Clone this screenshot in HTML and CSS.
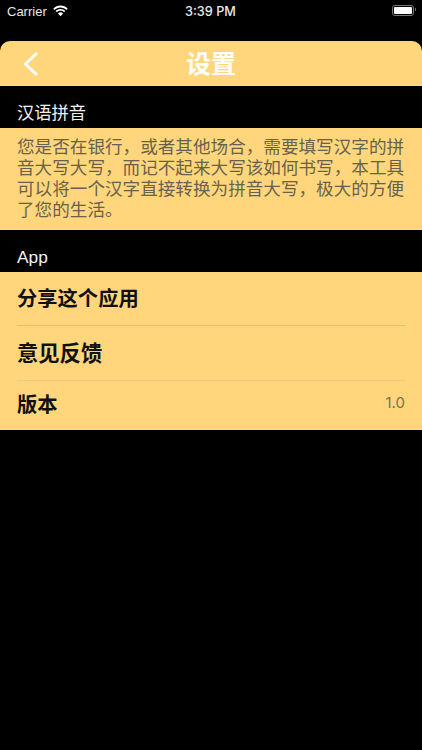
FILE: index.html
```html
<!DOCTYPE html>
<html lang="zh">
<head>
    <meta charset="UTF-8">
    <meta name="viewport" content="width=device-width, initial-scale=1.0">
    <title>设置</title>
    <link rel="stylesheet" href="styles.css">
</head>
<body>
    <div class="statusbar">
        <div class="status-left">
            <span class="carrier">Carrier</span>
            <svg class="wifi" width="16" height="12" viewBox="0 0 16 12">
                <path d="M8 2.200c2.200 0 4.200.9 5.700 2.300l1.100-1.200C13 1.500 10.600.4 8 .4S3 1.500 1.200 3.300l1.100 1.200C3.800 3.100 5.800 2.200 8 2.200z" fill="#fff"/>
                <path d="M8 5.400c1.300 0 2.500.5 3.400 1.300l1.200-1.200C11.400 4.300 9.800 3.600 8 3.600s-3.400.7-4.600 1.900l1.200 1.200C5.500 5.900 6.700 5.400 8 5.400z" fill="#fff"/>
                <path d="M8 6.800c-1 0-1.800.4-2.400 1L8 10.400l2.400-2.600c-.6-.6-1.400-1-2.400-1z" fill="#fff"/>
            </svg>
        </div>
        <div class="status-time">3:39 PM</div>
        <div class="battery"><div class="battery-level"></div></div>
    </div>

    <div class="navbar">
        <svg class="back" width="18" height="26" viewBox="0 0 18 26">
            <path d="M15 2 L3.500 13 L15 24" fill="none" stroke="#fff" stroke-width="3"/>
        </svg>
        <div class="nav-title">设置</div>
    </div>

    <div class="section-label">汉语拼音</div>
    <div class="band intro">您是否在银行，或者其他场合，需要填写汉字的拼音大写大写，而记不起来大写该如何书写，本工具可以将一个汉字直接转换为拼音大写，极大的方便了您的生活。</div>

    <div class="section-label">App</div>
    <div class="band">
        <div class="row row-share"><span class="row-title">分享这个应用</span></div>
        <div class="row row-feedback"><span class="row-title">意见反馈</span></div>
        <div class="row row-version"><span class="row-title">版本</span><span class="row-value">1.0</span></div>
    </div>
</body>
</html>
```

FILE: styles.css
```css
body {
    margin: 0;
    height: 750px;
    overflow: hidden;
    background: #000;
    color: #fff;
    font-family: "Liberation Sans", "Noto Sans CJK SC", sans-serif;
}

.statusbar {
    height: 41px;
    padding: 1px 8px 0 7px;
    box-sizing: border-box;
    display: grid;
    grid-template-columns: 1fr auto 1fr;
    align-items: start;
    font-size: 13px;
    line-height: 20px;
    color: #e8e8e8;
}

.status-left {
    display: flex;
    align-items: center;
    gap: 5px;
}

.carrier {
    padding-top: 1px;
}

.wifi {
    width: 17px;
    height: 13px;
    margin-top: -1px;
}

.status-time {
    padding-top: 1px;
    font-family: Inter, sans-serif;
    font-size: 12.700px;
    font-weight: 500;
}

.battery {
    justify-self: end;
    position: relative;
    width: 18px;
    height: 7px;
    margin-top: 4px;
    padding: 1px;
    border: 1px solid #777;
    border-radius: 3px;
}

.battery::after {
    content: "";
    position: absolute;
    right: -3px;
    top: 2px;
    width: 1px;
    height: 3px;
    background: #666;
}

.battery-level {
    height: 100%;
    background: #fff;
    border-radius: 1px;
}

.navbar {
    height: 45px;
    padding-bottom: 4px;
    box-sizing: border-box;
    background: #ffd67c;
    border-radius: 10px 10px 0 0;
    display: flex;
    align-items: center;
    justify-content: center;
    position: relative;
}

.back {
    position: absolute;
    left: 22px;
    top: 10px;
}

.nav-title {
    font-size: 25px;
    font-weight: 700;
    color: #fff;
}

.section-label {
    height: 42px;
    box-sizing: border-box;
    padding: 17px 17px 0;
    font-size: 17.300px;
    line-height: 20px;
    color: #f2f2f2;
}

.band {
    background: #ffd67c;
}

.intro {
    height: 102px;
    box-sizing: border-box;
    padding: 9px 17px 0;
    font-size: 17.600px;
    line-height: 21px;
    color: #68624c;
}

.row {
    margin: 0 17px;
    display: flex;
    justify-content: space-between;
    align-items: center;
    box-sizing: border-box;
}

.row-share {
    height: 54px;
    padding-bottom: 4px;
    border-bottom: 1px solid #c9c2a6;
}

.row-feedback {
    height: 55px;
    padding-bottom: 3px;
    border-bottom: 1px solid #e8cb88;
}

.row-version {
    height: 49px;
    padding-bottom: 6px;
}

.row-title {
    font-size: 20.300px;
    font-weight: 700;
    color: #111;
}

.row-feedback .row-title {
    font-size: 21.300px;
}

.row-value {
    font-family: Inter, sans-serif;
    font-size: 15px;
    color: #77714f;
}
```
